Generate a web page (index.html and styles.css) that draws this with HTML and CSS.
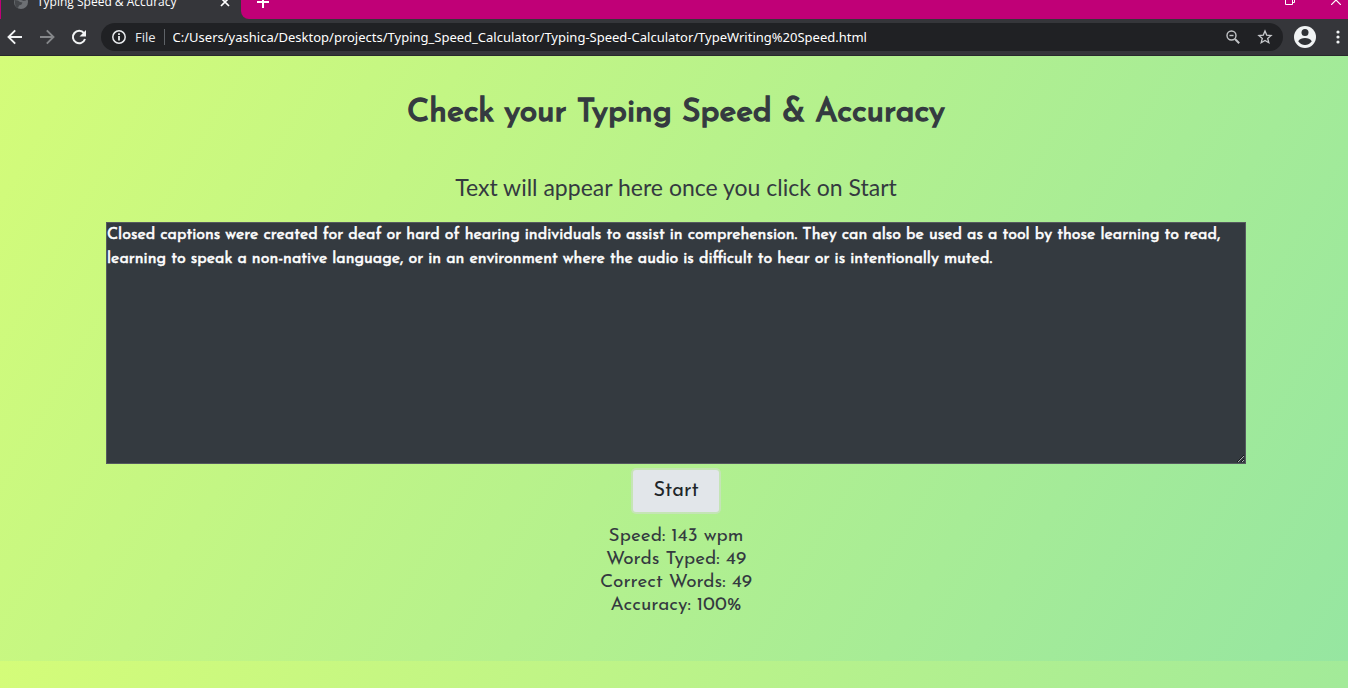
FILE: index.html
```html
<!DOCTYPE html>
<html lang="en">
<head>
<meta charset="utf-8">
<title>Typing Speed &amp; Accuracy</title>
<link rel="stylesheet" href="styles.css">
</head>
<body>
<header class="browser">
  <div class="tabstrip">
    <div class="tab">
      <svg class="globe" width="16" height="16" viewBox="0 0 16 16"><circle cx="8" cy="8" r="7" fill="#6d7074"/><path d="M1.500 6l3.500.5 2 1.500 2.500.5-1 2-2.500 1-1 2.500-2.500-1.500zM8 3l3-1.500 3 3-1 2-2.500.5L8 6z" fill="#45474b"/></svg>
      <span class="tab-title">Typing Speed &amp; Accuracy</span>
      <button class="icon-button" aria-label="Close tab"><svg width="10" height="10" viewBox="0 0 10 10"><path d="M1 1l8 8M9 1L1 9" stroke="#fff" stroke-width="1.7"/></svg></button>
    </div>
    <button class="icon-button new-tab" aria-label="New tab"><svg width="12" height="12" viewBox="0 0 12 12"><path d="M6 0v12M0 6h12" stroke="#fff" stroke-width="2"/></svg></button>
    <div class="window-controls">
      <button class="icon-button" aria-label="Restore"><svg width="10" height="10" viewBox="0 0 10 10" fill="none" stroke="#fff"><path d="M.5 2.500h7v7h-7zM2.500 2V.5h7v7H8"/></svg></button>
      <button class="icon-button" aria-label="Close window"><svg width="10" height="10" viewBox="0 0 10 10"><path d="M0 0l10 10M10 0L0 10" stroke="#fff" stroke-width="1.200"/></svg></button>
    </div>
  </div>
  <div class="toolbar">
    <nav class="nav">
      <button class="icon-button" aria-label="Back"><svg width="16" height="16" viewBox="0 0 16 16" fill="none" stroke="#f1f3f4" stroke-width="1.900"><path d="M15 8H2M8.200 1.300L1.500 8l6.700 6.700"/></svg></button>
      <button class="icon-button" aria-label="Forward"><svg width="16" height="16" viewBox="0 0 16 16" fill="none" stroke="#85878a" stroke-width="1.900"><path d="M1 8h13M7.800 1.300L14.500 8l-6.700 6.700"/></svg></button>
      <button class="icon-button" aria-label="Reload"><svg width="16" height="16" viewBox="0 0 16 16"><path d="M13 4.200A6.200 6.200 0 1 0 14 10" fill="none" stroke="#f1f3f4" stroke-width="2"/><path d="M15 1v6.500H8.500z" fill="#f1f3f4"/></svg></button>
    </nav>
    <div class="omnibox">
      <svg width="16" height="16" viewBox="0 0 16 16"><circle cx="8" cy="8" r="6.200" fill="none" stroke="#e8eaed" stroke-width="1.500"/><path d="M8 7v4.500M8 4.300v1.700" stroke="#e8eaed" stroke-width="1.800"/></svg>
      <label class="scheme" for="address">File</label>
      <input class="address" id="address" type="text" value="C:/Users/yashica/Desktop/projects/Typing_Speed_Calculator/Typing-Speed-Calculator/TypeWriting%20Speed.html">
      <button class="icon-button" aria-label="Zoom"><svg width="16" height="16" viewBox="0 0 16 16" fill="none" stroke="#c1c3c6" stroke-width="1.400"><circle cx="6.500" cy="6.500" r="4.500"/><path d="M4.500 6.500h4"/><path d="M10 10l4.200 4.200" stroke-width="2"/></svg></button>
      <button class="icon-button" aria-label="Bookmark"><svg width="16" height="16" viewBox="0 0 16 16" fill="none" stroke="#c8cacd" stroke-width="1.300"><path d="M8 2l1.700 4.100 4.400.4-3.400 2.900 1.100 4.300L8 11.400l-3.800 2.300 1.100-4.300-3.400-2.900 4.400-.4z"/></svg></button>
    </div>
    <button class="icon-button" aria-label="Profile"><svg width="22" height="22" viewBox="0 0 22 22"><circle cx="11" cy="11" r="11" fill="#f1f3f4"/><circle cx="11" cy="6.500" r="3.500" fill="#303236"/><path d="M4.200 15.300c1.300-2.100 4-3.200 6.800-3.200s5.500 1.100 6.800 3.200C16.200 17.700 13.800 19 11 19s-5.200-1.300-6.800-3.700z" fill="#303236"/></svg></button>
    <button class="icon-button menu" aria-label="Menu"><svg width="4" height="14" viewBox="0 0 4 14" fill="#f1f3f4"><circle cx="2" cy="2" r="1.600"/><circle cx="2" cy="7" r="1.600"/><circle cx="2" cy="12" r="1.600"/></svg></button>
  </div>
</header>
<main class="page">
  <h1 class="title">Check your Typing Speed &amp; Accuracy</h1>
  <label class="prompt" for="typed">Text will appear here once you click on Start</label>
  <textarea class="typed" id="typed" spellcheck="false">Closed captions were created for deaf or hard of hearing individuals to assist in comprehension. They can also be used as a tool by those learning to read, learning to speak a non-native language, or in an environment where the audio is difficult to hear or is intentionally muted.</textarea>
  <button class="start">Start</button>
  <div class="results">
    <div>Speed: 143 wpm</div>
    <div>Words Typed: 49</div>
    <div>Correct Words: 49</div>
    <div>Accuracy: 100%</div>
  </div>
</main>
</body>
</html>
```
FILE: styles.css
```css
* { box-sizing: border-box; }
body {
  margin: 0;
  min-height: 100vh;
  display: flex;
  flex-direction: column;
  font-family: "Josefin Sans", Lato, sans-serif;
  color: #343a40;
}
svg { display: block; flex: none; }
.icon-button { padding: 0; border: 0; background: none; flex: none; }

.browser { background: #35363a; font-family: "Segoe UI", "Open Sans", sans-serif; color: #fff; }
.tabstrip {
  height: 19px;
  display: flex;
  align-items: flex-end;
  background: linear-gradient(90deg, #c00077 1px, #35363a 1px 260px, #c00077 260px);
  overflow: hidden;
}
.tab {
  flex: 0 0 240px;
  height: 34px;
  margin-left: 1px;
  padding: 0 11px 0 12px;
  display: flex;
  align-items: center;
  gap: 8px;
  background: #35363a;
}
.tab-title { flex: 1; font-size: 12px; line-height: 16px; white-space: nowrap; }
.new-tab {
  height: 34px;
  padding: 0 16px;
  flex: 1;
  text-align: left;
  border-bottom-left-radius: 8px;
  background: #c00077;
}
.window-controls {
  display: flex;
  align-items: center;
  gap: 36px;
  height: 34px;
  padding: 0 7px 4px 0;
}

.toolbar {
  height: 37px;
  display: flex;
  align-items: center;
  padding: 0 8px 0 7px;
  border-bottom: 1px solid #28292c;
}
.nav { display: flex; gap: 16px; margin-right: 14px; }
.omnibox {
  flex: 1;
  min-width: 0;
  height: 28px;
  margin-right: 11px;
  padding: 0 10px;
  display: flex;
  align-items: center;
  gap: 16px;
  border-radius: 14px;
  background: #202124;
}
.scheme {
  margin-left: -8px;
  padding-right: 8px;
  border-right: 1px solid #5f6368;
  color: #e8eaed;
  font-size: 13px;
  line-height: 16px;
}
.address {
  flex: 1;
  min-width: 0;
  margin-left: -8px;
  padding: 0;
  border: 0;
  background: none;
  color: #fff;
  font: 13px/18px "Segoe UI", "Noto Sans", sans-serif;
}
.menu { margin-left: 20px; }

.page {
  flex: 1;
  display: flex;
  flex-direction: column;
  align-items: center;
  padding: 35px 102px 0 106px;
  background: linear-gradient(120deg, #d4fc79 0%, #96e6a1 100%) 0 0 / 100% 605px;
}
.title {
  margin: 0 0 34px;
  font-size: 32px;
  line-height: 44px;
  font-weight: 400;
  -webkit-text-stroke: 0.04em #343a40;
}
.prompt { margin-bottom: 17px; font: 400 23px/36px Lato, sans-serif; }
.typed {
  width: 100%;
  height: 242px;
  padding: 0;
  border: 1px solid #555a5f;
  background: #343a40;
  color: #fff;
  font: 400 16px/24px "Josefin Sans", Lato, sans-serif;
  -webkit-text-stroke: 0.03em #fff;
}
.start {
  margin: 6px 0 13px;
  padding: 6px 20px;
  border: 0;
  border-radius: 3px;
  background: #e2e6ea;
  box-shadow: 0 0 0 2px rgba(216, 217, 219, .5);
  color: #212529;
  font: 20px/30px "Josefin Sans", Lato, sans-serif;
}
.results { font-size: 19px; line-height: 23px; text-align: center; }
```
